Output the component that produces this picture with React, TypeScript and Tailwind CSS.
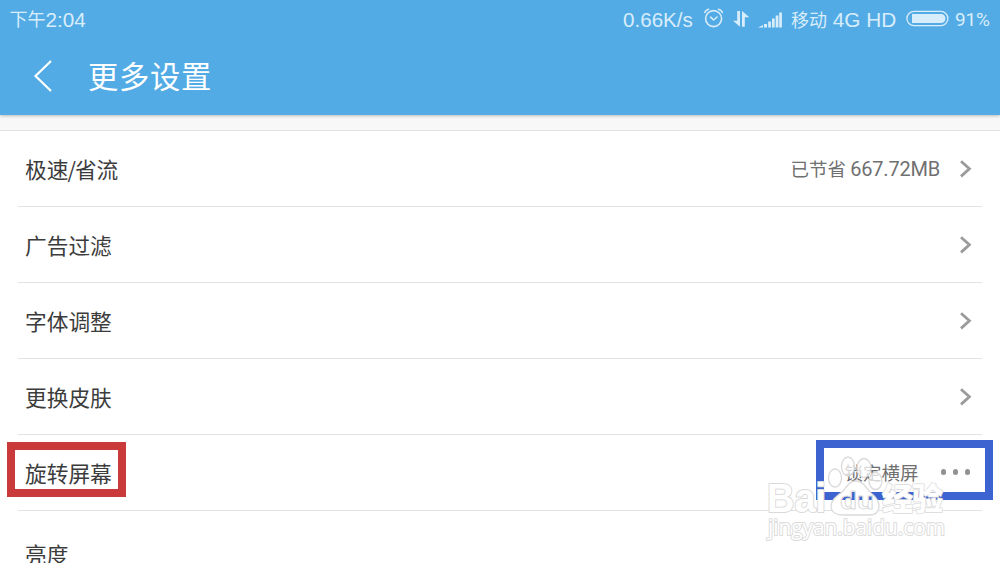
import { ReactNode } from 'react';
import clsx from 'clsx';

type SettingType = {
    label: ReactNode;
    value?: ReactNode;
    action?: 'chevron' | 'more';
}

const settings: SettingType[] = [
    {
        label: <>极速<span className="-mx-[1px]">/</span>省流</>,
        value: <>已节省 <span className="font-['Roboto',sans-serif] text-[20px] leading-none tracking-[-0.2px]">667.72MB</span></>,
        action: 'chevron'
    },
    { label: '广告过滤', action: 'chevron' },
    { label: '字体调整', action: 'chevron' },
    { label: '更换皮肤', action: 'chevron' },
    { label: '旋转屏幕', value: '锁定横屏', action: 'more' },
]

const AlarmIcon = () => (
    <svg width="20" height="20" viewBox="0 0 20 20" fill="none" stroke="currentColor" strokeWidth="1.6" strokeLinecap="round">
        <circle cx="9.6" cy="10.6" r="8" />
        <path d="M.8 4.4Q2 2 4.6 1.2M18.4 4.4Q17.2 2 14.6 1.2M6.6 9.2 9.6 12l3.4-3" />
    </svg>
)

const DataIcon = () => (
    <svg width="18" height="16" viewBox="0 0 18 16" fill="currentColor">
        <path d="M4.2 0h2.8v15.8L0 9.8h4.2zM9 0l7.4 6.2h-4.6v9.6H9z" />
    </svg>
)

const SignalIcon = () => (
    <svg width="25" height="16" viewBox="0 0 25 16" fill="currentColor">
        <path d="M0 15.5 5 13v2.5zM6 12h3v3.5H6zM10.2 9.5h2.7v6h-2.7zM14 6.5h2.7v9H14zM17.7 3.5h2.7v12h-2.7zM21.2.5h2.7v15h-2.7z" />
    </svg>
)

const BatteryIcon = () => (
    <svg width="43" height="17" viewBox="0 0 43 17" fill="none">
        <rect x=".9" y="1.4" width="41" height="14.2" rx="7.1" stroke="currentColor" strokeWidth="1.3" />
        <path d="M6 4h29a4.5 4.5 0 0 1 0 9H6z" fill="currentColor" />
    </svg>
)

const Chevron = () => (
    <svg className="mr-[2px]" width="12" height="18" viewBox="0 0 12 18" fill="none" stroke="#9b9b9b" strokeWidth="2.8">
        <path d="m1 1.2 8.4 7.6-8.4 7.6" />
    </svg>
)

function StatusBar() {
    return (
        <div className="flex h-10 items-center whitespace-nowrap pl-[9.5px] font-['Liberation_Sans','Noto_Sans_CJK_SC',sans-serif] leading-none text-[#d8edfb]">
            <div className="flex flex-1 items-center text-[20.7px]">
                <span className="pt-px text-[18px]">下午</span>2:04
            </div>
            <span className="w-[81px] text-[20.6px]">0.66K/s</span>
            <span className="-mt-[4px] w-[29px]"><AlarmIcon /></span>
            <span className="-mt-[2px] w-[25px]"><DataIcon /></span>
            <span className="-mt-[1px] w-[33px]"><SignalIcon /></span>
            <span className="w-[115px] text-[20.8px]"><span className="text-[18px]">移动</span> 4G HD</span>
            <span className="-mt-[3px] w-[49px]"><BatteryIcon /></span>
            <span className="-mt-[2px] w-[45px] font-['Roboto',sans-serif] text-[19px] tracking-[-0.2px]">91%</span>
        </div>
    )
}

function SettingRow({ setting }: { setting: SettingType }) {
    return (
        <div className="mx-[18px] flex h-[76px] shrink-0 items-center justify-between border-b border-[#e2e2e2] pr-[8px] pl-[7px] leading-none">
            <span className="text-[21.7px] text-[#3c3c3c]">{setting.label}</span>
            <div className="flex items-center">
                <span className={clsx('text-[18.5px] whitespace-nowrap text-[#707070]', setting.action === 'more' ? 'mr-[22px]' : 'mr-[20px] pt-px')}>{setting.value}</span>
                {setting.action === 'more' &&
                    <div className="mr-[4px] flex gap-[6.5px] pb-px">
                        <i className="size-[5.5px] rounded-full bg-[#929292]" />
                        <i className="size-[5.5px] rounded-full bg-[#929292]" />
                        <i className="size-[5.5px] rounded-full bg-[#929292]" />
                    </div>}
                {setting.action === 'chevron' && <Chevron />}
            </div>
        </div>
    )
}

function Watermark() {
    return (
        <svg className="absolute top-[450px] left-[762px]" width="190" height="96" viewBox="0 0 190 96"
            fill="#fff" stroke="#dadada" strokeWidth="1.3" strokeLinejoin="round">
            <defs>
                <linearGradient id="band" gradientUnits="userSpaceOnUse" x1="0" y1="0" x2="0" y2="96">
                    <stop offset=".437" stopColor="#fff" />
                    <stop offset=".437" stopColor="#3d63d0" />
                    <stop offset=".521" stopColor="#3d63d0" />
                    <stop offset=".521" stopColor="#fff" />
                </linearGradient>
            </defs>
            <g fillOpacity=".72">
                <ellipse cx="86" cy="16.5" rx="6.5" ry="9.5" />
                <ellipse cx="102" cy="18" rx="7" ry="9.5" />
                <ellipse cx="73" cy="28" rx="6.5" ry="9" />
                <ellipse cx="113.5" cy="31" rx="6.5" ry="8.5" />
            </g>
            <path d="M94 31c-7 0-9 6-14 11-5 4-11 8-11 14 0 6 5 9 12 9h26c7 0 10-4 10-9s-3-9-8-13c-5-5-8-12-15-12z" />
            <g fontFamily="'Liberation Sans', 'Noto Sans CJK SC', sans-serif" fontWeight="700">
                <text x="5" y="61.5" fontSize="40" textLength="59" lengthAdjust="spacingAndGlyphs" strokeWidth="2" paintOrder="stroke">Bai</text>
                <text x="78" y="59" fontSize="24" textLength="34" lengthAdjust="spacingAndGlyphs" fill="url(#band)" strokeWidth=".9">du</text>
                <text x="120" y="59.5" fontSize="31" fontWeight="900" textLength="61" strokeWidth="1.5" paintOrder="stroke">经验</text>
            </g>
            <text x="6" y="85" fontFamily="'Open Sans', sans-serif" fontSize="21" stroke="#dcdcdc" strokeWidth="2" paintOrder="stroke"
                textLength="177" lengthAdjust="spacingAndGlyphs">jingyan.baidu.com</text>
        </svg>
    )
}

export default function App() {
    return (
        <div className="relative flex h-[563px] w-[1000px] flex-col overflow-hidden bg-white font-['Noto_Sans_CJK_SC',sans-serif]">
            <header className="z-10 h-[115px] shrink-0 bg-[#53abe5] shadow-[0_1px_3px_rgba(0,0,0,0.25)]">
                <StatusBar />
                <div className="flex h-[72px] items-center pl-[33px] text-white">
                    <svg width="20" height="32" viewBox="0 0 20 32" fill="none" stroke="currentColor" strokeWidth="2.2">
                        <path d="M18 1 2.5 16 18 31" />
                    </svg>
                    <h1 className="-mt-[2px] ml-[35px] text-[30.3px] leading-none tracking-[0.7px]">更多设置</h1>
                </div>
            </header>
            <div className="h-4 shrink-0 border-b border-[#e0e0e0] bg-[#f8f8f8]" />
            <main className="flex flex-col">
                {settings.map((setting, index) => <SettingRow key={index} setting={setting} />)}
                <div className="h-[52px] shrink-0 pt-[32px] pl-[25px] text-[21.7px] leading-none text-[#3c3c3c]">亮度</div>
            </main>

            {/* highlighted areas */}
            <div className="absolute top-[442px] left-[7px] h-[55px] w-[119px] border-[8px] border-[#cb3a3b]" />
            <div className="absolute top-[440px] left-[816px] h-[60px] w-[177px] border-[8px] border-[#3d63d0]" />
            <Watermark />
        </div>
    )
}
